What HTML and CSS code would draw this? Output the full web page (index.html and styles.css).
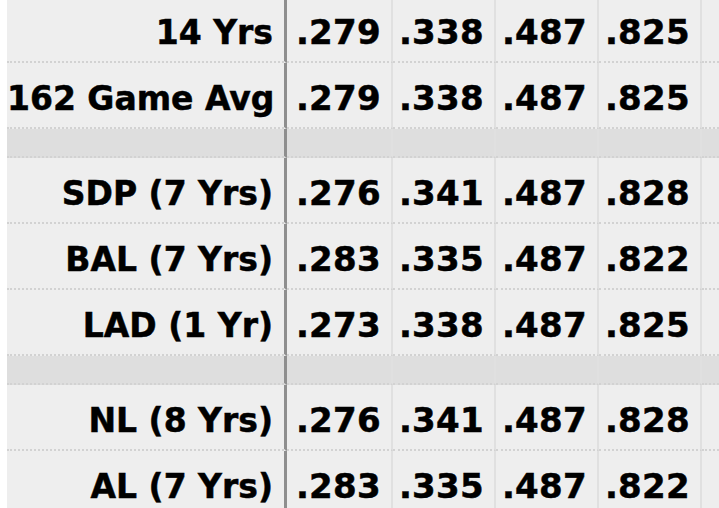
FILE: index.html
```html
<!DOCTYPE html>
<html>
<head>
<meta charset="utf-8">
<link rel="stylesheet" href="styles.css">
</head>
<body>
<table class="stats">
  <colgroup>
    <col class="c-label">
    <col class="c-first">
    <col class="c-num">
    <col class="c-num">
    <col class="c-num">
    <col class="c-extra">
  </colgroup>
  <tbody>
    <tr class="row"><th class="label">14 Yrs</th><td>.279</td><td>.338</td><td>.487</td><td>.825</td><td class="extra"></td></tr>
    <tr class="row"><th class="label">162 Game Avg</th><td>.279</td><td>.338</td><td>.487</td><td>.825</td><td class="extra"></td></tr>
    <tr class="spacer"><th class="label"></th><td></td><td></td><td></td><td></td><td class="extra"></td></tr>
    <tr class="row"><th class="label">SDP (7 Yrs)</th><td>.276</td><td>.341</td><td>.487</td><td>.828</td><td class="extra"></td></tr>
    <tr class="row"><th class="label">BAL (7 Yrs)</th><td>.283</td><td>.335</td><td>.487</td><td>.822</td><td class="extra"></td></tr>
    <tr class="row"><th class="label">LAD (1 Yr)</th><td>.273</td><td>.338</td><td>.487</td><td>.825</td><td class="extra"></td></tr>
    <tr class="spacer"><th class="label"></th><td></td><td></td><td></td><td></td><td class="extra"></td></tr>
    <tr class="row"><th class="label">NL (8 Yrs)</th><td>.276</td><td>.341</td><td>.487</td><td>.828</td><td class="extra"></td></tr>
    <tr class="row"><th class="label">AL (7 Yrs)</th><td>.283</td><td>.335</td><td>.487</td><td>.822</td><td class="extra"></td></tr>
  </tbody>
</table>
</body>
</html>
```
FILE: styles.css
```css
* {
  box-sizing: border-box;
}
html, body {
  margin: 0;
  padding: 0;
  background: #ffffff;
  overflow: hidden;
}
.stats {
  margin: -3px 0 0 7px;
  width: 736px;
  border-collapse: separate;
  border-spacing: 0;
  table-layout: fixed;
  font-family: "DejaVu Sans", Verdana, sans-serif;
  font-weight: bold;
  font-size: 33px;
  color: #000;
  -webkit-text-stroke: 0.5px #000;
}
.c-label { width: 280px; }
.c-first { width: 106px; }
.c-num { width: 103px; }
.c-extra { width: 41px; }
.stats th, .stats td {
  background: #eeeeee;
  padding: 6px 10px 0 0;
  text-align: right;
  white-space: nowrap;
  border-right: 2px solid #e0e0e0;
  border-bottom: 2px dotted #d2d2d2;
}
.stats td {
  font-size: 34px;
  letter-spacing: 0.3px;
}
.stats th.label {
  padding-right: 11px;
  border-right: 3px solid #8e8e8e;
}
.row th, .row td {
  height: 66px;
}
.spacer th, .spacer td {
  height: 29px;
  padding: 0;
  background: #dedede;
}
```
